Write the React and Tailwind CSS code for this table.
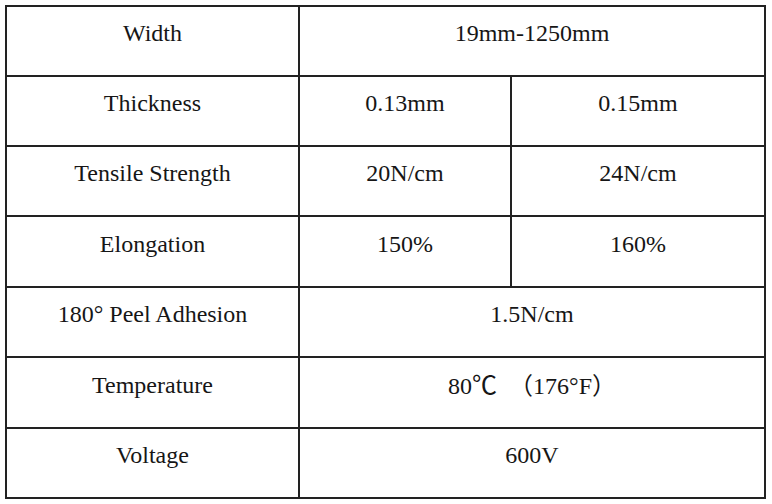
import React from 'react';

const rows = [
    { label: 'Width', values: ['19mm-1250mm'], h: 'h-[70px]' },
    { label: 'Thickness', values: ['0.13mm', '0.15mm'], h: 'h-[70px]' },
    { label: 'Tensile Strength', values: ['20N/cm', '24N/cm'], h: 'h-[70px]' },
    { label: 'Elongation', values: ['150%', '160%'], h: 'h-[71px]' },
    { label: '180° Peel Adhesion', values: ['1.5N/cm'], h: 'h-[70px]' },
    { label: 'Temperature', values: [null], h: 'h-[71px]' },
    { label: 'Voltage', values: ['600V'], h: 'h-[68px]' },
];

// mixed fonts: CJK glyphs for the degree sign and full-width brackets
const Temp = () => (
    <>
        80<span className="font-['Noto_Sans_CJK_SC',serif] text-[25px]">℃</span>
        {'  '}
        <span className="font-['Noto_Sans_CJK_SC',serif]">（</span>176°F
        <span className="font-['Noto_Sans_CJK_SC',serif]">）</span>
    </>
);

const Cell = ({ children, className = '' }) => (
    <div className={`flex items-center justify-center pb-[16px] ${className}`}>
        <span className="whitespace-pre leading-[28px]">{children}</span>
    </div>
);

const App = () => {
    return (
        <div className="w-[772px] h-[504px] bg-white pl-[5px] pt-[5px] text-[24px] text-[#161616] font-['Liberation_Serif','Times_New_Roman','DejaVu_Serif',serif]">
            <div className="w-[761px] border-2 border-[#222]">
                {rows.map((row, i) => {
                    const last = i === rows.length - 1;
                    return (
                        <div
                            key={row.label}
                            className={`flex ${row.h} ${last ? '' : 'border-b-2 border-[#222]'}`}
                        >
                            <Cell className="w-[293px] border-r-2 border-[#222]">{row.label}</Cell>
                            {row.values.length === 1 ? (
                                <Cell className="flex-1">{row.values[0] ?? <Temp />}</Cell>
                            ) : (
                                <>
                                    <Cell className="w-[212px] border-r-2 border-[#222]">{row.values[0]}</Cell>
                                    <Cell className="flex-1">{row.values[1]}</Cell>
                                </>
                            )}
                        </div>
                    );
                })}
            </div>
        </div>
    );
};

export default App;
